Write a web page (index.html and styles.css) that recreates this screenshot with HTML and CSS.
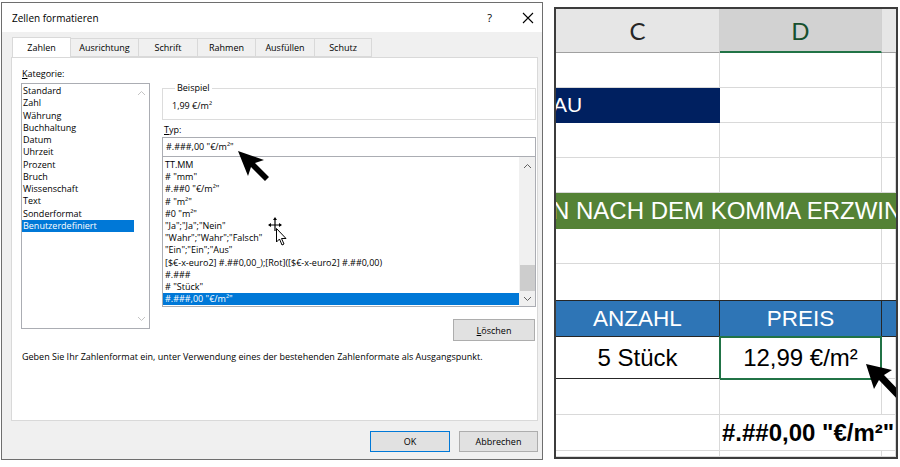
FILE: index.html
```html
<!DOCTYPE html>
<html lang="de">
<head>
<meta charset="utf-8">
<title>Zellen formatieren</title>
<link rel="stylesheet" href="styles.css">
</head>
<body>
<div class="page">
  <div class="dialog">
    <div class="titlebar">
      <span class="title">Zellen formatieren</span>
      <span class="help">?</span>
      <svg class="close" width="12" height="12" viewBox="0 0 12 12"><path d="M1 1L11 11M11 1L1 11" stroke="#000" stroke-width="1.1" fill="none"/></svg>
    </div>
    <div class="dlg-body">
      <div class="tabs">
        <div class="tab active w59">Zahlen</div>
        <div class="tab w68">Ausrichtung</div>
        <div class="tab w59">Schrift</div>
        <div class="tab w58">Rahmen</div>
        <div class="tab w59">Ausfüllen</div>
        <div class="tab w57">Schutz</div>
      </div>
      <div class="panel">
        <div class="cols">
          <div class="left-col">
            <div class="label"><u>K</u>ategorie:</div>
            <div class="listbox cat">
              <div class="items">
                <div class="item">Standard</div>
                <div class="item">Zahl</div>
                <div class="item">Währung</div>
                <div class="item">Buchhaltung</div>
                <div class="item">Datum</div>
                <div class="item">Uhrzeit</div>
                <div class="item">Prozent</div>
                <div class="item">Bruch</div>
                <div class="item">Wissenschaft</div>
                <div class="item">Text</div>
                <div class="item">Sonderformat</div>
                <div class="item selected">Benutzerdefiniert</div>
              </div>
              <div class="vscroll plain">
                <svg width="9" height="6" viewBox="0 0 9 6"><path d="M1 5L4.5 1.5L8 5" stroke="#c4c4c4" fill="none"/></svg>
                <svg width="9" height="6" viewBox="0 0 9 6"><path d="M1 1L4.5 4.5L8 1" stroke="#c4c4c4" fill="none"/></svg>
              </div>
            </div>
          </div>
          <div class="right-col">
            <fieldset class="group">
              <legend>Beispiel</legend>
              <div class="sample">1,99 €/m²</div>
            </fieldset>
            <div class="label typ"><u>T</u>yp:</div>
            <div class="input">#.###,00 "€/m²"</div>
            <div class="listbox fmt">
              <div class="items">
                <div class="item">TT.MM</div>
                <div class="item"># "mm"</div>
                <div class="item">#.##0 "€/m²"</div>
                <div class="item"># "m²"</div>
                <div class="item">#0 "m²"</div>
                <div class="item">"Ja";"Ja";"Nein"</div>
                <div class="item">"Wahr";"Wahr";"Falsch"</div>
                <div class="item">"Ein";"Ein";"Aus"</div>
                <div class="item">[$€-x-euro2] #.##0,00_);[Rot]([$€-x-euro2] #.##0,00)</div>
                <div class="item">#.###</div>
                <div class="item"># "Stück"</div>
                <div class="item selected">#.###,00 "€/m²"</div>
              </div>
              <div class="vscroll track">
                <svg class="up" width="9" height="6" viewBox="0 0 9 6"><path d="M1 5L4.5 1.5L8 5" stroke="#606060" fill="none"/></svg>
                <div class="thumb"></div>
                <svg class="down" width="9" height="6" viewBox="0 0 9 6"><path d="M1 1L4.5 4.5L8 1" stroke="#606060" fill="none"/></svg>
              </div>
            </div>
            <div class="btn-row">
              <button class="btn del"><u>L</u>öschen</button>
            </div>
          </div>
        </div>
        <p class="hint">Geben Sie Ihr Zahlenformat ein, unter Verwendung eines der bestehenden Zahlenformate als Ausgangspunkt.</p>
      </div>
      <div class="footer">
        <button class="btn ok">OK</button>
        <button class="btn cancel">Abbrechen</button>
      </div>
    </div>
    <svg class="pointer-arrow" width="40" height="40" viewBox="0 0 40 40">
      <path d="M2 2L28 11L19 14L33 28L29 32L15 18L12 27Z" fill="#000"/>
    </svg>
    <svg class="move-cursor" width="24" height="34" viewBox="0 0 24 34">
      <path d="M8 3V15M2 9H14" stroke="#000" stroke-width="1.2"/>
      <path d="M8 1L6 4H10Z M1 9L4 7V11Z M15 9L12 7V11Z" fill="#000"/>
      <path d="M9.5 12.5V26L12.5 23L15 29L17 28L14.5 22.5H19Z" fill="#fff" stroke="#000" stroke-width="1" stroke-linejoin="round"/>
    </svg>
  </div>

  <div class="sheet">
    <div class="grid">
      <div class="cell hdr">C</div>
      <div class="cell hdr hdr-sel">D</div>
      <div class="cell hdr hdr-e"></div>

      <div class="cell"></div><div class="cell"></div><div class="cell"></div>

      <div class="cell navy"><span class="clip-l">AU</span></div><div class="cell"></div><div class="cell"></div>

      <div class="cell"></div><div class="cell"></div><div class="cell"></div>

      <div class="cell"></div><div class="cell"></div><div class="cell"></div>

      <div class="cell green span3"><span class="band-text">N NACH DEM KOMMA ERZWINGEN</span></div>

      <div class="cell"></div><div class="cell"></div><div class="cell"></div>

      <div class="cell"></div><div class="cell"></div><div class="cell"></div>

      <div class="cell th">ANZAHL</div><div class="cell th">PREIS</div><div class="cell th th-e"></div>

      <div class="cell td">5 Stück</div><div class="cell td active">12,99 €/m²</div><div class="cell"></div>

      <div class="cell"></div><div class="cell"></div><div class="cell"></div>

      <div class="cell"></div><div class="cell fmt-cell">#.##0,00 "€/m²"</div><div class="cell"></div>

      <div class="cell"></div><div class="cell"></div><div class="cell"></div>
    </div>
    <svg class="sheet-arrow" width="50" height="50" viewBox="0 0 50 50">
      <path d="M2 2L28 8L20 13L40 34L35 39L15 18L10 27Z" fill="#000"/>
    </svg>
  </div>
</div>
</body>
</html>
```

FILE: styles.css
```css
* { box-sizing: border-box; }

body {
  margin: 0;
  width: 900px;
  height: 467px;
  overflow: hidden;
  background: #fff;
  font-family: "Open Sans", "Noto Sans", sans-serif;
  color: #000;
}

.page {
  display: flex;
  align-items: flex-start;
  height: 467px;
}

/* ---------- dialog ---------- */
.dialog {
  position: relative;
  margin: 2px 0 0 1px;
  width: 542px;
  height: 458px;
  border: 1px solid #6e6e6e;
  background: #f0f0f0;
  display: flex;
  flex-direction: column;
}

.titlebar {
  height: 29px;
  flex: none;
  background: #fff;
  display: flex;
  align-items: center;
  padding-left: 10px;
  font-size: 10px;
}
.title { flex: 1; }
.help { font-size: 11px; margin-right: 30px; }
.close { margin-right: 8px; }

.dlg-body {
  flex: 1;
  display: flex;
  flex-direction: column;
  padding: 6px 3px 0 9px;
}

.tabs {
  display: flex;
  height: 19px;
  padding-left: 1px;
  position: relative;
  z-index: 1;
}
.tab {
  height: 19px;
  border: 1px solid #d9d9d9;
  border-left: none;
  background: #f0f0f0;
  font-size: 9px;
  display: flex;
  align-items: center;
  justify-content: center;
}
.tab:first-child { border-left: 1px solid #d9d9d9; }
.tab.active {
  background: #fff;
  height: 20px;
  margin-top: -1px;
  border-bottom: none;
}
.w59 { width: 59px; }
.w68 { width: 68px; }
.w58 { width: 58px; }
.w57 { width: 57px; }

.panel {
  width: 527px;
  height: 364px;
  background: #fff;
  border: 1px solid #d9d9d9;
  padding: 8px 0 0 9px;
}

.cols {
  display: flex;
  gap: 12px;
}

.left-col { padding-top: 2px; }

.label {
  font-size: 9px;
  line-height: 12px;
  height: 12px;
  padding-left: 1px;
}
.label u, .btn u { text-decoration-thickness: 1px; text-underline-offset: 1px; }

.listbox {
  border: 1px solid #abadb3;
  background: #fff;
  display: flex;
  font-size: 9px;
}
.items { flex: 1; min-width: 0; }
.item {
  height: 12.25px;
  line-height: 12.25px;
  white-space: nowrap;
  padding-left: 1px;
}
.item.selected { background: #0078d7; color: #fff; }

.cat {
  margin-top: 3px;
  width: 129px;
  height: 246px;
}
.cat .items { padding-top: 1px; }
.vscroll {
  width: 15px;
  flex: none;
  display: flex;
  flex-direction: column;
  align-items: center;
  justify-content: space-between;
}
.vscroll.plain { padding: 6px 0 6px; }

.right-col {
  width: 374px;
  margin-top: 16px;
}

.group {
  margin: 0;
  padding: 0 0 0 9px;
  min-width: 0;
  height: 38px;
  border: 1px solid #dcdcdc;
  font-size: 9px;
}
.group legend {
  padding: 0 2px;
  margin-left: 3px;
  line-height: 12px;
}
.sample { line-height: 12px; margin-top: 6px; }

.typ { margin-top: 4px; padding-left: 2px; }

.input {
  margin-top: 1px;
  height: 20px;
  border: 1px solid #abadb3;
  font-size: 9px;
  line-height: 18px;
  padding-left: 3px;
}

.fmt {
  height: 150px;
  border-top: none;
}
.fmt .items { padding-top: 2px; }
.fmt .item { padding-left: 2px; height: 12.2px; line-height: 12.2px; }
.vscroll.track {
  width: 16px;
  background: #f0f0f0;
  justify-content: flex-start;
}
.vscroll.track .up { margin-top: 6px; }
.vscroll.track .thumb {
  width: 15px;
  height: 26px;
  background: #cdcdcd;
  margin-top: 96px;
}
.vscroll.track .down { margin-top: 5px; }

.btn-row {
  display: flex;
  justify-content: flex-end;
  margin-top: 12px;
  padding-right: 1px;
}
.btn {
  font-family: inherit;
  font-size: 9px;
  color: #000;
  background: #e1e1e1;
  border: 1px solid #adadad;
  height: 22px;
  padding: 0;
  margin: 0;
}
.del { width: 82px; }

.hint {
  margin: 10px 0 0 1px;
  font-size: 9px;
  line-height: 12px;
}

.footer {
  display: flex;
  justify-content: flex-end;
  gap: 9px;
  padding: 10px 1px 0 0;
}
.ok { width: 80px; height: 21px; border: 1px solid #0078d7; }
.cancel { width: 79px; height: 21px; }

.pointer-arrow {
  position: absolute;
  left: 234px;
  top: 146px;
}
.move-cursor {
  position: absolute;
  left: 265px;
  top: 213px;
}

/* ---------- sheet ---------- */
.sheet {
  position: relative;
  margin: 7px 0 0 11px;
  width: 344px;
  height: 452px;
  border: 2px solid #3c3c3c;
  overflow: hidden;
}

.grid {
  display: grid;
  grid-template-columns: 164px 162px 1fr;
  grid-template-rows: 44px 35px 35px 35px 35px 36px 35px 37px 36px 42px 36px 36px 1fr;
  height: 100%;
  font-family: "Liberation Sans", Arial, sans-serif;
}

.cell {
  border-right: 1px solid #d9d9d9;
  border-bottom: 1px solid #d9d9d9;
  display: flex;
  align-items: center;
  justify-content: center;
  overflow: hidden;
  white-space: nowrap;
}

.hdr {
  background: #e6e6e6;
  border-bottom: 1px solid #a0a0a0;
  border-right: 1px solid #d0d0d0;
  font-family: "Lato", "Open Sans", sans-serif;
  font-size: 24px;
  color: #262626;
}
.hdr-sel {
  background: #d2d2d2;
  border-bottom: 2px solid #217346;
  color: #17502e;
}
.hdr-e { border-right: none; }

.navy {
  background: #002060;
  color: #fff;
  justify-content: flex-start;
  font-size: 21px;
  border-right: none;
  border-bottom-color: #002060;
}
.clip-l { margin-left: -3px; }

.span3 { grid-column: 1 / 4; }
.green {
  background: #548235;
  color: #fff;
  justify-content: flex-start;
  font-size: 24px;
  border: none;
}
.band-text { margin-left: -4px; }

.th {
  background: #2e75b6;
  color: #fff;
  font-size: 22.5px;
  border-top: 1px solid #262626;
  border-right: 1px solid #262626;
  border-bottom: 1px solid #262626;
  margin-top: -1px;
}
.th-e { border-right: none; }

.td {
  font-size: 24px;
  border-bottom: 1px solid #262626;
  border-right: 1px solid #262626;
}
.td.active {
  border: 2px solid #217346;
  margin: -1px 0 -1px -1px;
}

.fmt-cell {
  font-weight: bold;
  font-size: 24px;
  justify-content: flex-start;
  padding-left: 2px;
  overflow: visible;
  position: relative;
  z-index: 1;
  border-right: none;
}

.sheet-arrow {
  position: absolute;
  left: 308px;
  top: 353px;
}
```
